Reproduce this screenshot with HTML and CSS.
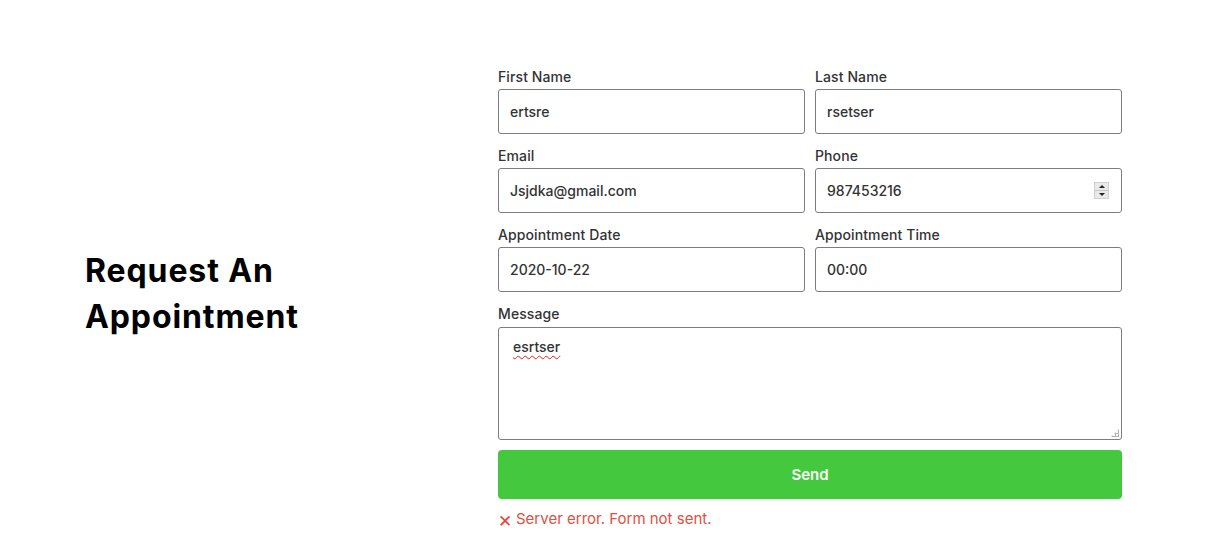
FILE: index.html
```html
<!DOCTYPE html>
<html lang="en">
<head>
<meta charset="utf-8">
<title>Request An Appointment</title>
<link rel="stylesheet" href="styles.css">
</head>
<body>
<main class="section">
  <div class="intro">
    <h2 class="title">Request An<br>Appointment</h2>
  </div>
  <form class="form">
    <div class="grid">
      <label class="field">
        <span class="label">First Name</span>
        <input class="input" type="text" value="ertsre">
      </label>
      <label class="field">
        <span class="label">Last Name</span>
        <input class="input" type="text" value="rsetser">
      </label>
      <label class="field">
        <span class="label">Email</span>
        <input class="input" type="text" value="Jsjdka@gmail.com">
      </label>
      <label class="field">
        <span class="label">Phone</span>
        <span class="input-wrap">
          <input class="input" type="text" value="987453216">
          <span class="spinner"><span class="spin-up"></span><span class="spin-down"></span></span>
        </span>
      </label>
      <label class="field">
        <span class="label">Appointment Date</span>
        <input class="input" type="text" value="2020-10-22">
      </label>
      <label class="field">
        <span class="label">Appointment Time</span>
        <input class="input" type="text" value="00:00">
      </label>
      <div class="field wide">
        <span class="label">Message</span>
        <div class="textarea"><span class="typo">esrtser</span><span class="grip"></span></div>
      </div>
    </div>
    <button class="send" type="button">Send</button>
    <p class="error"><span class="error-icon">&#x2715;</span>Server error. Form not sent.</p>
  </form>
</main>
</body>
</html>
```
FILE: styles.css
```css
* { box-sizing: border-box; }
html, body { margin: 0; padding: 0; background: #fff; }
body {
  font-family: "Inter", "Liberation Sans", sans-serif;
  color: #333;
}
.section {
  display: flex;
  align-items: center;
  padding: 67px 0 0 85px;
}
.intro {
  width: 413px;
  flex: none;
  padding-bottom: 10px;
}
.title {
  margin: 0;
  font-size: 32px;
  line-height: 46px;
  font-weight: 700;
  color: #000;
  letter-spacing: 0.9px;
}
.form {
  width: 624px;
  flex: none;
}
.grid {
  display: grid;
  grid-template-columns: 1fr 1fr;
  column-gap: 10px;
  row-gap: 12px;
}
.field {
  display: flex;
  flex-direction: column;
  gap: 3px;
}
.wide { grid-column: 1 / 3; }
.label {
  font-size: 14px;
  line-height: 19px;
  font-weight: 500;
  color: #333;
  letter-spacing: 0.1px;
}
.input-wrap { position: relative; display: block; }
.input {
  display: block;
  width: 100%;
  height: 45px;
  border: 1px solid #7a7e83;
  border-radius: 3px;
  padding: 0 11px;
  font-family: inherit;
  font-size: 14px;
  font-weight: 500;
  color: #333;
  background: #fff;
  outline: none;
}
.spinner {
  position: absolute;
  right: 13px;
  top: 14px;
  width: 15px;
  height: 17px;
  background: #e9e9e9;
  border: 1px solid #d0d0d0;
  display: flex;
  flex-direction: column;
}
.spin-up, .spin-down {
  flex: 1;
  display: flex;
  align-items: center;
  justify-content: center;
}
.spin-up { border-bottom: 1px solid #c8c8c8; }
.spin-up::before {
  content: "";
  border-left: 3px solid transparent;
  border-right: 3px solid transparent;
  border-bottom: 3px solid #222;
}
.spin-down::before {
  content: "";
  border-left: 3px solid transparent;
  border-right: 3px solid transparent;
  border-top: 3px solid #222;
}
.textarea {
  position: relative;
  height: 113px;
  margin-top: 1px;
  border: 1px solid #7a7e83;
  border-radius: 3px;
  padding: 9px 14px;
  font-size: 14px;
  font-weight: 500;
  line-height: 19px;
  color: #333;
}
.typo {
  text-decoration: underline wavy #e02020;
  text-decoration-thickness: 1px;
  text-underline-offset: 3px;
}
.grip {
  position: absolute;
  right: 2px;
  bottom: 2px;
  width: 8px;
  height: 8px;
  background:
    radial-gradient(circle, #b5b5b5 1px, transparent 1.2px) 0 0 / 3px 3px;
  clip-path: polygon(100% 0, 100% 100%, 0 100%);
}
.send {
  display: block;
  width: 100%;
  height: 49px;
  margin-top: 10px;
  border: 0;
  border-radius: 4px;
  background: #44c83e;
  color: #fff;
  font-family: inherit;
  font-size: 15px;
  font-weight: 600;
}
.error {
  margin: 7px 0 0;
  display: flex;
  align-items: center;
  gap: 4px;
  font-size: 15px;
  line-height: 20px;
  color: #e0503f;
}
.error-icon {
  font-size: 17px;
  font-weight: 400;
  color: #e0463b;
  padding-top: 5px;
}
```
